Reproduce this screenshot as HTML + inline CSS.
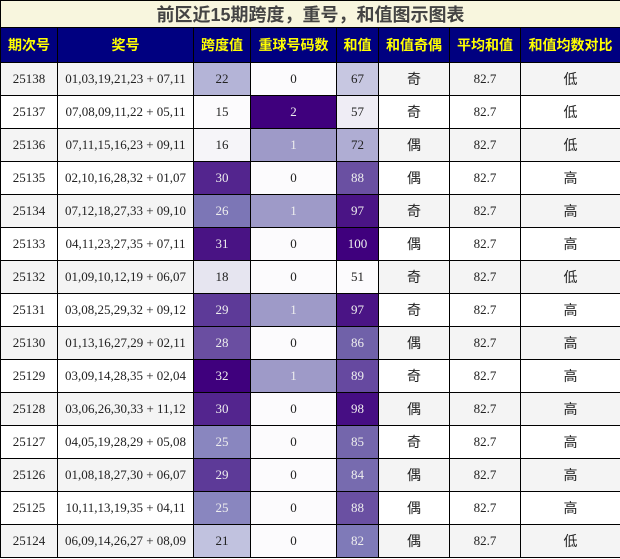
<!DOCTYPE html>
<html><head><meta charset="utf-8"><style>
html,body{margin:0;padding:0;background:#fff;width:620px;height:559px;overflow:hidden}
table{border-collapse:collapse;table-layout:fixed;width:620px;font-family:"Liberation Serif","Noto Serif CJK SC",serif;font-size:13px;color:#222}
td,th{border:1.5px solid #000;text-align:center;padding:0;overflow:hidden;white-space:nowrap}
.t td{height:26px;background:#f8f6de;color:#444;font-family:"Liberation Sans","Noto Sans CJK SC",sans-serif;font-size:18px;font-weight:bold}
th{height:34px;background:#000080;color:#ffff00;font-family:"Liberation Sans","Noto Sans CJK SC",sans-serif;font-size:14px;font-weight:bold}
tr.r td{height:32px}
tr.o td{background:#f4f4f4}
tr.e td{background:#fff}
.c{font-family:"Liberation Sans","Noto Sans CJK SC",sans-serif;font-size:14px}
.w{color:#eee}
</style></head><body>
<table>
<colgroup><col style="width:57px"><col style="width:136px"><col style="width:57px"><col style="width:86px"><col style="width:42px"><col style="width:71px"><col style="width:71px"><col style="width:100px"></colgroup>
<tr class="t"><td colspan="8">前区近15期跨度，重号，和值图示图表</td></tr>
<tr><th>期次号</th><th>奖号</th><th>跨度值</th><th>重球号码数</th><th>和值</th><th>和值奇偶</th><th>平均和值</th><th>和值均数对比</th></tr>
<tr class="r o"><td>25138</td><td>01,03,19,21,23 + 07,11</td><td style="background:#b4b4d7">22</td><td style="background:#fcfbfd">0</td><td style="background:#c7c7e1">67</td><td class="c">奇</td><td>82.7</td><td class="c">低</td></tr>
<tr class="r e"><td>25137</td><td>07,08,09,11,22 + 05,11</td><td style="background:#fcfbfd">15</td><td class="w" style="background:#3f007d">2</td><td style="background:#efedf5">57</td><td class="c">奇</td><td>82.7</td><td class="c">低</td></tr>
<tr class="r o"><td>25136</td><td>07,11,15,16,23 + 09,11</td><td style="background:#f6f5f9">16</td><td class="w" style="background:#9e9ac8">1</td><td style="background:#afadd3">72</td><td class="c">偶</td><td>82.7</td><td class="c">低</td></tr>
<tr class="r e"><td>25135</td><td>02,10,16,28,32 + 01,07</td><td class="w" style="background:#53258e">30</td><td style="background:#fcfbfd">0</td><td class="w" style="background:#6a50a2">88</td><td class="c">偶</td><td>82.7</td><td class="c">高</td></tr>
<tr class="r o"><td>25134</td><td>07,12,18,27,33 + 09,10</td><td class="w" style="background:#7c76b6">26</td><td class="w" style="background:#9e9ac8">1</td><td class="w" style="background:#4a1485">97</td><td class="c">奇</td><td>82.7</td><td class="c">高</td></tr>
<tr class="r e"><td>25133</td><td>04,11,23,27,35 + 07,11</td><td class="w" style="background:#491384">31</td><td style="background:#fcfbfd">0</td><td class="w" style="background:#3f007d">100</td><td class="c">偶</td><td>82.7</td><td class="c">高</td></tr>
<tr class="r o"><td>25132</td><td>01,09,10,12,19 + 06,07</td><td style="background:#e6e5f0">18</td><td style="background:#fcfbfd">0</td><td style="background:#fcfbfd">51</td><td class="c">奇</td><td>82.7</td><td class="c">低</td></tr>
<tr class="r e"><td>25131</td><td>03,08,25,29,32 + 09,12</td><td class="w" style="background:#5d3a98">29</td><td class="w" style="background:#9e9ac8">1</td><td class="w" style="background:#4a1485">97</td><td class="c">奇</td><td>82.7</td><td class="c">高</td></tr>
<tr class="r o"><td>25130</td><td>01,13,16,27,29 + 02,11</td><td class="w" style="background:#6a4ea1">28</td><td style="background:#fcfbfd">0</td><td class="w" style="background:#7061a9">86</td><td class="c">偶</td><td>82.7</td><td class="c">高</td></tr>
<tr class="r e"><td>25129</td><td>03,09,14,28,35 + 02,04</td><td class="w" style="background:#3f007d">32</td><td class="w" style="background:#9e9ac8">1</td><td class="w" style="background:#6649a0">89</td><td class="c">奇</td><td>82.7</td><td class="c">高</td></tr>
<tr class="r o"><td>25128</td><td>03,06,26,30,33 + 11,12</td><td class="w" style="background:#53258e">30</td><td style="background:#fcfbfd">0</td><td class="w" style="background:#460e83">98</td><td class="c">偶</td><td>82.7</td><td class="c">高</td></tr>
<tr class="r e"><td>25127</td><td>04,05,19,28,29 + 05,08</td><td class="w" style="background:#8986bf">25</td><td style="background:#fcfbfd">0</td><td class="w" style="background:#7466ac">85</td><td class="c">奇</td><td>82.7</td><td class="c">高</td></tr>
<tr class="r o"><td>25126</td><td>01,08,18,27,30 + 06,07</td><td class="w" style="background:#5d3a98">29</td><td style="background:#fcfbfd">0</td><td class="w" style="background:#776baf">84</td><td class="c">偶</td><td>82.7</td><td class="c">高</td></tr>
<tr class="r e"><td>25125</td><td>10,11,13,19,35 + 04,11</td><td class="w" style="background:#8986bf">25</td><td style="background:#fcfbfd">0</td><td class="w" style="background:#6a50a2">88</td><td class="c">偶</td><td>82.7</td><td class="c">高</td></tr>
<tr class="r o"><td>25124</td><td>06,09,14,26,27 + 08,09</td><td style="background:#c1c2df">21</td><td style="background:#fcfbfd">0</td><td class="w" style="background:#7f7ab8">82</td><td class="c">偶</td><td>82.7</td><td class="c">低</td></tr>
</table>
</body></html>
